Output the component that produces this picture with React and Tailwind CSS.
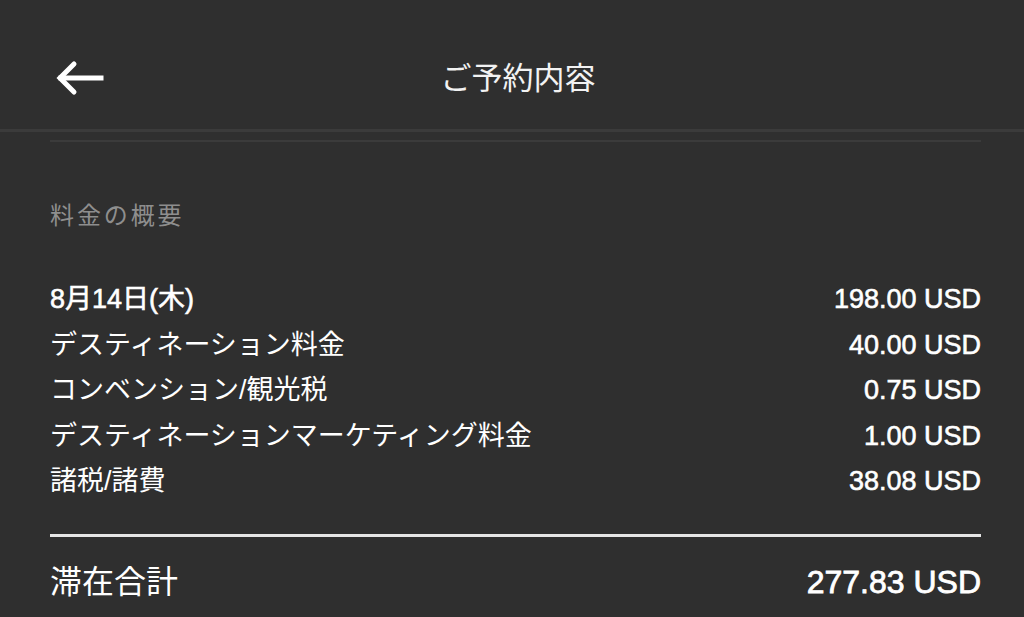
import React from "react";

const rows = [
  ["8月14日(木)", "198.00 USD"],
  ["デスティネーション料金", "40.00 USD"],
  ["コンベンション/観光税", "0.75 USD"],
  ["デスティネーションマーケティング料金", "1.00 USD"],
  ["諸税/諸費", "38.08 USD"],
];

const font = { fontFamily: '"Liberation Sans", "Noto Sans CJK JP", sans-serif' };

export default function App() {
  return (
    <div className="w-[1024px] h-[617px] overflow-hidden bg-[#2f2f2f] text-white" style={font}>
      {/* Header */}
      <header className="h-[132px] relative border-b-[3px] border-[#3b3b3b]">
        <button className="absolute left-[55px] top-[58px] text-white">
          <svg width="50" height="40" viewBox="0 0 50 40" fill="none" stroke="white" strokeWidth="5" strokeLinecap="square">
            <path d="M6 20H46" />
            <path d="M19 6L5 20L19 34" strokeLinecap="round" strokeLinejoin="miter" />
          </svg>
        </button>
        <h1 className="w-full text-center text-[31px] leading-none pl-[12px] pt-[63px] text-[#f2f2f2]">ご予約内容</h1>
      </header>

      <div className="px-[50px] pr-[43px]">
        <div className="mt-[8px] h-[2px] bg-[#3b3b3b]" />

        <h2 className="mt-[62px] text-[24px] tracking-[0.12em] text-[#8e8e8e] leading-none">料金の概要</h2>

        <div className="mt-[49px] flex flex-col">
          {rows.map(([label, amount]) => (
            <div key={label} className="flex justify-between items-center h-[45.5px] text-[27px] leading-none">
              <span className={label.startsWith("8") ? "[-webkit-text-stroke:0.6px_white]" : ""}>{label}</span>
              <span className="[-webkit-text-stroke:0.6px_white]">{amount}</span>
            </div>
          ))}
        </div>

        <div className="mt-[29px] h-[3px] bg-[#e6e6e6]" />

        <div className="mt-[29px] flex justify-between items-center text-[32px] leading-none">
          <span>滞在合計</span>
          <span className="[-webkit-text-stroke:0.8px_white]">277.83 USD</span>
        </div>
      </div>
    </div>
  );
}
